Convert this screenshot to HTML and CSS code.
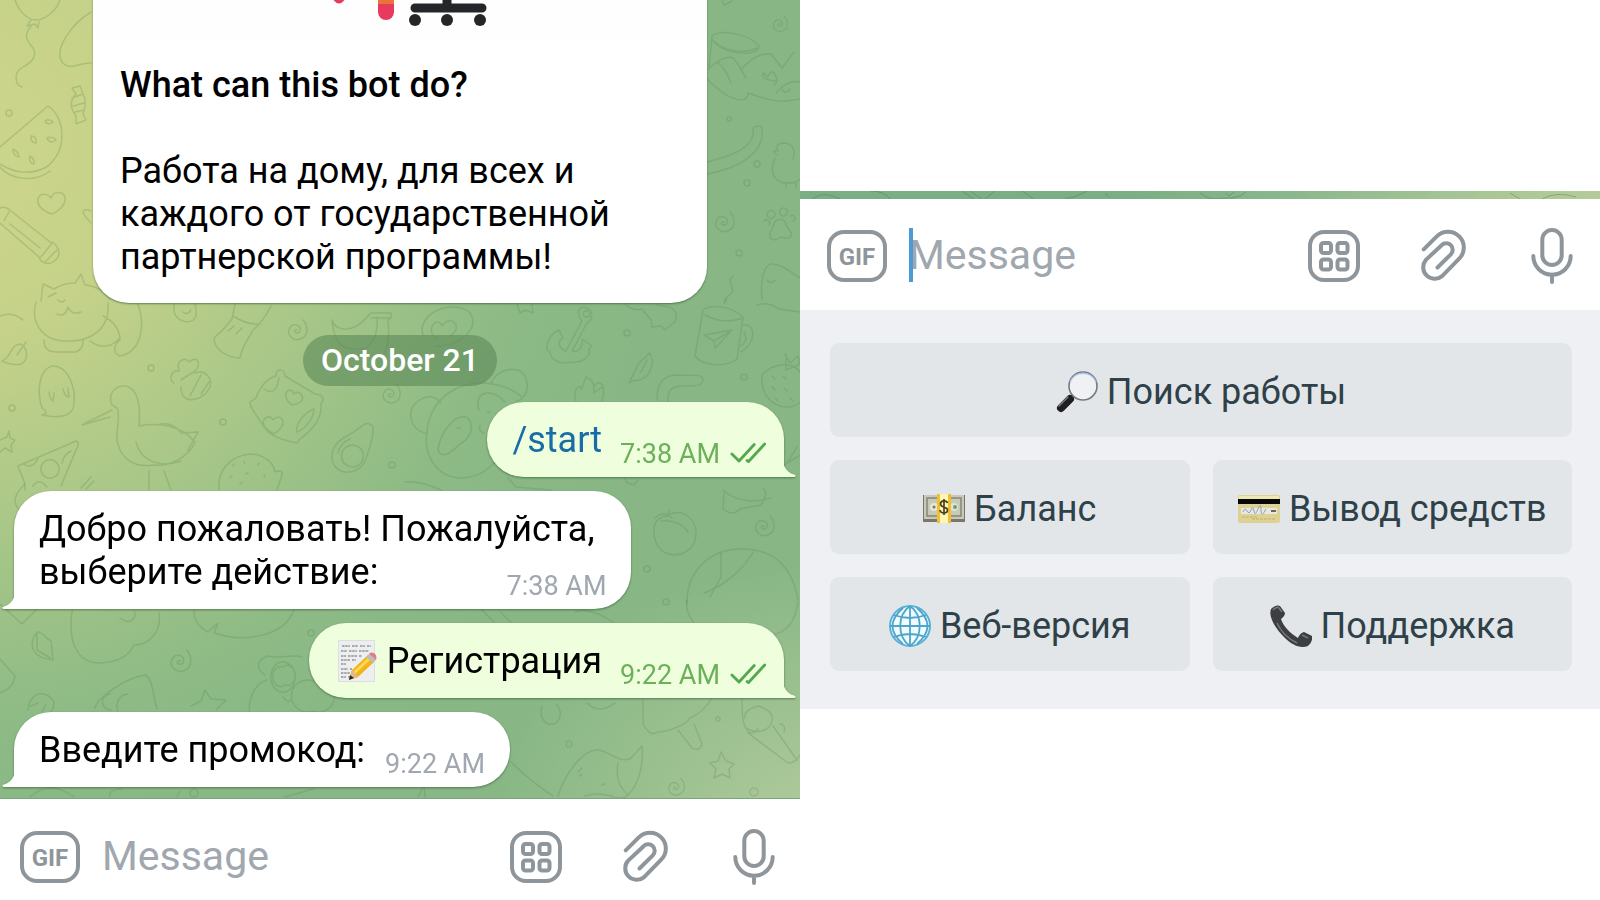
FILE: index.html
```
<!DOCTYPE html>
<html lang="ru">
  <head>
    <meta charset="UTF-8" />
    <meta name="viewport" content="width=device-width, initial-scale=1.0" />
    <title>Bot chat</title>
    <link rel="stylesheet" href="styles.css">
  </head>
  <body>
    <!-- shared icons -->
    <svg class="sprite" aria-hidden="true">
      <symbol id="i-grid" viewBox="0 0 60 60">
        <rect x="6" y="6" width="48" height="48" rx="14" />
        <rect x="17" y="17" width="10" height="10" rx="2.5" />
        <rect x="33.500" y="17" width="10" height="10" rx="2.5" />
        <rect x="17" y="33.500" width="10" height="10" rx="2.5" />
        <rect x="33.500" y="33.500" width="10" height="10" rx="2.5" />
      </symbol>
      <symbol id="i-clip" viewBox="0 0 60 60">
        <path d="M10.700 23.400L23.800 10.300A15.800 15.800 0 0 1 46.200 32.700L29.100 50.100A11.500 11.500 0 0 1 12.900 33.900L28.600 19.200A6.500 6.500 0 0 1 37.800 28.400L24.500 41.500" />
      </symbol>
      <symbol id="i-mic" viewBox="0 0 60 60">
        <rect x="20.300" y="4" width="19.400" height="35" rx="9.700" />
        <path d="M11.300 30a18.700 18.700 0 0 0 37.400 0M30 49v7" />
      </symbol>
      <symbol id="i-checks" viewBox="0 0 40 24">
        <path d="M2 13l7.500 7.500L25.500 3M18 20l1.500 1L36.500 2.500" />
      </symbol>
      <symbol id="tail" viewBox="0 0 16 28">
        <path d="M16 0C16 14 11 24 3 25.500C.5 26 1 28 4 28H16z" />
      </symbol>
      <symbol id="spiral" viewBox="0 0 26 26">
        <path d="M14 13c-2-1-4 2-1 3c5 1 6-6 1-8c-7-2-11 7-6 12c6 6 16 1 16-7c0-5-2-8-4-10" />
      </symbol>
    </svg>

    <main class="screens">
      <section class="screen">
        <div class="chat">
          <svg class="doodles" viewBox="0 0 800 800" preserveAspectRatio="xMinYMin slice" aria-hidden="true">
            <!-- balloon, candy, melon, pencil -->
            <path d="M15 0c4 12 13 20 21 20s20-8 24-20M31 20l-4 6 8-2 3 4 1-6M31 26c-14 18 10 18 2 33c-6 9-16 7-17 18c0 6 2 9 6 10" />
            <path d="M91 12C70 25 54 50 62 62c8 10 18 0 29 1" />
            <path d="M72 88l8-2 3 8c4 6 2 14 0 20l3 6-10 4 0-8c-6-8-6-16 0-22zM72 98l11-4M73 106l11-3M75 112l9-2" />
            <path d="M0 147L48 106C66 118 67 150 48 166C32 176 14 173 0 164M0 167c12 14 36 15 50 4" />
            <path d="M45 121q4-3 8 1q-5 4-8-1M31 136q6 0 5 7q-6-1-5-7M47 138q6-2 9 2q-6 5-9-2M13 149q6 3 6 8q-6-1-6-8M30 156q5 3 4 8q-6-1-4-8" />
            <path d="M52 214c-9-3-15-8-14-15c2-7 10-5 13-1c2-7 12-7 14-1c1 8-7 15-13 17z" />
            <path d="M0 208c4-2 8 0 11 3L50 242c5 0 9 6 9 11c0 6-8 12-13 10c-4 0-6-3-7-6L0 223M4 221l5-9M41 257l11-14M45 262l12-12M10 224l30 24" />
            <path d="M91 211c-7-3-10 0-6 5l6 7" />
            <!-- sleeping cat -->
            <path d="M41 301l2-17 11 5c8-5 15-6 21-6l6-9 4 11c12 1 18 6 25 14M48 297l8-4M58 300q4 4 7 0M36 302c-6 20 6 39 30 39c25 1 44-12 42-38M57 314q8 4 11-7q4 9 13 5M44 340q0 12 12 12h20q8-3 7-13M103 316q16 8 17 23M90 341q16 12 30-3M138 304c8 22 3 48-18 52c-8-3-6-12 0-16" />
            <path d="M0 316q12-5 23 4M2 361c10-4 8-16 18-17c8 3 9 16 1 20q-8 2-19-3M17 355l9-13" />
            <path d="M42 408c-5-15-4-38 10-42c16-1 24 22 22 38c-1 12-13 15-32 11c5-1 6-3 0-7M49 392q1 8 4 9l1-8M63 389q2 8 6 8l-1-9" />
            <!-- stork -->
            <path d="M112 405c-5-12 4-20 14-19c12 3 15 20 13 40c22-4 43 0 56 16c-6 15-26 25-42 23c-20 3-33-7-36-25c-1-12 4-24 0-32zM112 410l-30 15l28-8M136 442c5 20 25 26 45 19M160 424q14-2 21 9l17-1l-10 18M149 471v19M164 471l7 19" />
            <path d="M18 466l58-25c4 1 2 6 0 9L61 486M18 466c2 8 8 14 7 24M24 464q7 6 14-5M62 463q2-9 9-12M44 462a8 8 0 1 0 12 14a8 8 0 1 0-12-14M33 486q6-9 14 1M0 440l7-3 2-6 1 7 5 2-4 5 1 7-7-4-5 4" />
            <path d="M174 383c-6-4-2-14 5-12c-4-12 8-14 10-9c10-8 12 4 6 9l-14 9M181 387c0 12 8 15 18 11c10-5 15-15 9-22c-4-5-8-5-13-3M190 396l11-21M201 394l8-12" />
            <!-- brush, cookie, pillow -->
            <path d="M235 304l-3 15c-6 8-12 14-18 19c0 12 14 20 26 20c2-12 8-18 13-28q10-8 18-24M233 316q14 9 27 8M228 331l6-5M236 334l6-6M174 304q-2 15 12 18q14 0 9-18M183 312q4 4 8-2" />
            <path d="M251 407l-1-5 6-4c4-12 12-20 20-22c-1-8 9-8 9 0l30 18c8 0 10 6 6 9c2 16-10 28-21 36l-3 4c-14-3-26-6-33-16zM297 432c-2-8 8-20 17-23c0 8-8 20-17 23M264 389q12 8 15-11M292 405c-8-6-8-12-3-15c5 0 4 3 5 4c5-5 10 2 8 7q-4 3-10 4M274 434c-14-8-12-14-7-17c4-1 6 3 6 3c8-8 12 2 9 6q-2 4-8 8" />
            <path d="M219 490c-2-20 12-35 32-36c15 1 23 10 24 18q8-3 7 3l-5 15M233 466l1-2M244 462l1 2M258 465l1-2M230 478l2-2M246 474l2-1M264 477l1-2M240 484l2-2M81 488l10-11M86 489l8-8M20 510Q8 500 25 484" />
            <use href="#spiral" x="283" y="317" width="26" height="26" />
            <use href="#spiral" x="378" y="382" width="24" height="24" />
            <!-- bananas and avocado -->
            <path d="M332 320c3 12 22 14 37-5l2-2h20v5l-3 2c1 10 1 25-4 33M332 320c2 25 12 32 34 28c10-8 12-20 11-31M371 318h20" />
            <path d="M362 426c6-5 12-2 11 6c-1 12-5 19-7 27c-5 14-24 18-32 6c-6-12 1-22 11-28c8-4 12-7 17-11zM352 445a10 10 0 1 0 1 22a10 10 0 1 0-1-22M338 453q2-10 12-14" />
            <path d="M423 336c-5-16 12-30 32-29c18 1 22 14 14 25c-9 10-22 14-33 14M437 339c-8-5-7-15 0-17q4 0 5 4q8-10 14-1q2 6-6 11" />
            <path d="M517 304l3 9 5-3 8 3-1-9" />
            <!-- panda -->
            <path d="M425 433c-14-3-20-22-7-32c9-6 17-6 23 2M491 384c4-14 28-22 35-6q5 18-10 24M427 432c-4 24 10 45 34 46c20 0 39-14 45-38M438 450c2-18 18-38 30-32c8 10 0 22-8 26c-8 8-18 16-22 6M479 410c-6-20 14-22 26-8M427 435c0-38 38-62 77-48q10 3 18 10M457 428h3M487 412h3M480 425q-2 6 4 8" />
            <!-- anchor and mug -->
            <path d="M580 308a7 7 0 1 1 7 15l-15 28c7 2 11-4 10-12l10 7-3 3c2 10-9 14-18 13c-9 3-20-1-21-10l-3-2q-1-14 12-20l4 8c-6 3-5 10 3 13l16-30q-6-7-2-13M584 312a3 3 0 1 0 5 4a3 3 0 1 0-5-4" />
            <path d="M625 304c4 4 9 7 17 5l9 11 1 7 9-1 4 4 10-8c3-6 1-13-6-15l-13-2M703 310l-8 46c8 10 30 12 42 3l6-42c-10-10-32-14-40-7zM705 315q18 10 38 3M742 325c14-3 15 18-1 27M744 332q5 8-3 14M704 335l28-5-13 14-4 4-1-7zM714 341l15-9M724 304q0-4 2-6" />
            <path d="M629 383l10-20c4-5 8-5 10-10c7 6 2 25-10 27q-6 0-10 3M641 372l6-12M657 400c0-20 8-25 22-25c12 1 24-2 24 5c-1 8-12 5-22 6c-12 1-13 6-13 16M576 401c-4-10 4-20 5-11l5-13c8 4 8 8 8 16l8-6c4 6 0 10 0 14M594 387q5-9 10 1M757 305q10-4 22 4l21 3" />
            <path d="M763 374c12-12 30-12 37-2M762 374c-2 20 10 33 25 33q8 0 13-5M785 354l5 9 8-7 2 8M786 354v16l14-6M772 376l3 3M783 376l3 3M772 387l3 3M784 388l3 3M775 398l3 3M790 398l3 3" />
            <path d="M723 490c10 10 30 14 48 8M724 493l-1 16q10 8 17 0l21-4q8-12 2-17M787 463l10-16M784 465l16-10M763 444v18M405 482q14-2 36 8M508 478l8 9 35 3M625 478l1 4 8 3 4-5" />
            <!-- tangerine and ball -->
            <path d="M667 516c-18 2-15 24-6 34c12 10 34 4 35-16c1-14-14-28-29-18M655 518q8-8 17 0M661 521q18-2 27 11M668 516l1-6" />
            <path d="M687 604c-1-30 20-55 55-55c30 0 50 15 56 51M721 552v25l-11 20M754 551c-10 18-30 35-50 42" />
            <use href="#spiral" x="750" y="513" width="26" height="26" />
            <!-- top right corner -->
            <path d="M712 36c10-8 38-1 47 10c0 8-15 9-29 5c-10-3-19-9-18-15zM714 41c10 12 35 12 43 7M712 38l-3 30M706 71c8-8 20-16 27-13c6 6 8 12 13 20M718 63q8 6 13 20M741 70c8-10 20-18 30-16l11 14 12-16M706 78c12 12 22 20 34 22q8 0 8-7c14 4 26 12 52 6M776 81c-10 0-16-6-12-8l4 4q4-10 8 0q2 6-2 8M776 93q12-14 24-11M782 90q4 5 8-1" />
            <path d="M707 162c16-4 50-12 46-34q6-4 9 0c3 25-22 40-55 46M778 151q-4-8 7-8q12 2 8 16M778 150l-5 2 4 3M775 158c-8 20 4 26 15 25q6 0 10-4M786 182v6M796 182v6" />
            <path d="M770 236c-2-5 4-7 4-12c2-6 10-6 12 0c0 5 7 6 5 12q-2 4-10 1q-9 6-11-1M768 212a3 3 0 1 1 6 5a3 3 0 1 1-6-5M781 209a3 3 0 1 1 5 6a3 3 0 1 1-5-6M790 216a3 3 0 1 1 3 5M764 221a3 3 0 1 1 5 4" />
            <path d="M762 300c-2-20 2-36 10-36c10 0 18 8 28 14M767 280q4 5 8 0M722 0l2 5 8-4M733 276c-8 6 4 12-2 18q-6 4-5 8" />
            <use href="#spiral" x="769" y="14" width="20" height="20" />
            <use href="#spiral" x="710" y="209" width="26" height="26" />
            <!-- bottom row -->
            <path d="M0 604l22 20 16-16M72 611c-4 30 4 52 28 52c18-1 28-6 34-18c14 0 28-12 25-32M120 618c10 8 18 0 14-7M194 610c0 12 6 18 14 22l10-9-4 10c30 10 70 4 80-23" />
            <path d="M37 632c6 0 8 6 14 9l2 19c-20-2-26-14-16-28M37 632v18l13 8M0 659l15 17c-1 8-6 14-15 17M28 710c2-20 20-20 26-8q0 8-4 10M31 706l7-3M42 712l4-8" />
            <path d="M95 708c2-10 30-30 50-33c8 3 8 22 12 34M110 694a8 8 0 1 0 1 16M128 694a12 12 0 0 0-10 17M191 706l10-5 4-11 6 9 15 1-10 10" />
            <path d="M265 675c-8-5-10-15 3-19c14 3 24-2 34 1M249 712c0-20 10-30 18-32M281 662a12 15 0 1 0 4 30a12 15 0 1 0-4-30M283 667a8 10 0 1 0 2 18a8 10 0 1 0-2-18M313 681a16 16 0 1 0 0 30a16 16 0 1 0 0-30M283 697q5 7 9 2" />
            <path d="M482 610l12 12M500 612l12 11M575 612q16-5 38 10M742 698c0 15 0 30 8 35q6 0 8-5M643 700v24c4 8 10 12 14 8c12 0 30-8 33-14q14-6 22-20M678 730l14 18q8 4 10-4l-8-20M745 718q-2-8 13-12q20 6 12 20q-10 10-24 2M748 733l40 30q8 0 12-8M773 726l24 34M780 724q6 0 4 8M542 706c-4 12 4 20 12 18c8-4 8-14 2-20M587 703q12 12 28 0" />
            <path d="M558 796c8-25 25-45 38-46c14 0 20 13 34 9l12-13c2 20-4 40-15 50q-8 4-16 0q-14-4-26 0M618 763q-4 20 10 32M578 772l4-4M580 776l2-2M602 785l3-1M511 762q20 20 42 34" />
            <path d="M721 752l-3 9 -8 2 6 6 -2 9 8-4 8 4-1-9 5-5-8-3z" />
            <path d="M30 797q20-18 44 0M110 797q-2-8 12-8M177 797l3-6M418 797l6-12 1 12M285 797l28-8M687 600q-3 16 14 30M798 602q-4 30-27 33" />
            <use href="#spiral" x="165" y="647" width="28" height="28" />
            <use href="#spiral" x="664" y="776" width="22" height="22" />
            <g>
              <circle cx="9" cy="113" r="3" /><circle cx="12" cy="408" r="3" /><circle cx="151" cy="368" r="3" />
              <circle cx="223" cy="422" r="3" /><circle cx="392" cy="465" r="3" /><circle cx="627" cy="333" r="3" />
              <circle cx="744" cy="377" r="3" /><circle cx="757" cy="164" r="3" /><circle cx="747" cy="183" r="3" />
              <circle cx="729" cy="119" r="2" /><circle cx="739" cy="253" r="3" /><circle cx="647" cy="569" r="3" />
              <circle cx="311" cy="633" r="3" /><circle cx="569" cy="744" r="3" /><circle cx="718" cy="719" r="2" />
              <circle cx="754" cy="792" r="4" /><circle cx="194" cy="793" r="4" /><circle cx="666" cy="602" r="3" />
            </g>
          </svg>

          <article class="intro">
            <svg class="intro-picture" viewBox="0 -4 614 40" preserveAspectRatio="xMidYMin meet" role="img" aria-label="Office chair">
              <path d="M293 -4v14" stroke="#e83a5e" stroke-width="16" stroke-linecap="round" />
              <path d="M285 -4h16v6h-16z" fill="#e8743c" />
              <path d="M239 -4q7 11 14 0z" fill="#e83a5e" />
              <path d="M322 6h67M354 -4v9" stroke="#25262a" stroke-width="9" stroke-linecap="round" />
              <circle cx="322" cy="18" r="6" fill="#25262a" />
              <circle cx="354" cy="18" r="6" fill="#25262a" />
              <circle cx="387" cy="18" r="6" fill="#25262a" />
            </svg>
            <h1>What can this bot do?</h1>
            <p>Работа на дому, для всех и каждого от государственной партнерской программы!</p>
          </article>

          <time class="date">October 21</time>

          <div class="messages">
            <div class="bubble out">
              <a class="command" href="#start">/start</a>
              <time class="time">7:38 AM</time>
              <svg class="checks"><use href="#i-checks" /></svg>
              <svg class="tail"><use href="#tail" /></svg>
            </div>

            <div class="bubble in long">
              <span class="line">Добро пожаловать! Пожалуйста,</span>
              <div class="last-line">
                <span>выберите действие:</span>
                <time class="time">7:38 AM</time>
              </div>
              <svg class="tail"><use href="#tail" /></svg>
            </div>

            <div class="bubble out">
              <span class="with-emoji">
                <svg class="emoji" viewBox="0 0 42 42">
                  <path d="M1 0h37v42H1z" fill="#dcdee1" />
                  <path d="M2 1h35v40H2z" fill="#eceef0" />
                  <path d="M5 6h8m2 0h6m2 0h5m2 0h4M4 11h6m2 0h8m2 0h10M4 16h5m2 0h9m2 0h3M4 20h9m2 0h4M4 24h5M4 29h7m2 0h2M4 33h9M4 37h5m2 0h2" stroke="#64666c" stroke-width="1.200" stroke-dasharray="2.500 .7" />
                  <path d="M12 40l3-10L31 15l6 7L21 37z" fill="#f0b41f" />
                  <path d="M17 33L33 18" stroke="#ffd84d" stroke-width="3" />
                  <path d="M12 40l3-10 6 7z" fill="#e2b98c" />
                  <path d="M12 40l1-5 4 3z" fill="#29292b" />
                  <path d="M29 17l3-3 7 6-3 3z" fill="#b9bcc2" />
                  <path d="M32 14c4-4 9 1 7 6z" fill="#e77b84" />
                </svg>
                Регистрация
              </span>
              <time class="time">9:22 AM</time>
              <svg class="checks"><use href="#i-checks" /></svg>
              <svg class="tail"><use href="#tail" /></svg>
            </div>

            <div class="bubble in">
              <span>Введите промокод:</span>
              <time class="time">9:22 AM</time>
              <svg class="tail"><use href="#tail" /></svg>
            </div>
          </div>
        </div>

        <form class="composer">
          <button type="button" class="gif">GIF</button>
          <div class="field">
            <input type="text" placeholder="Message" aria-label="Message" />
          </div>
          <button type="button" class="tool" aria-label="Bot keyboard"><svg><use href="#i-grid" /></svg></button>
          <button type="button" class="tool" aria-label="Attach"><svg><use href="#i-clip" /></svg></button>
          <button type="button" class="tool" aria-label="Voice message"><svg><use href="#i-mic" /></svg></button>
        </form>
      </section>

      <section class="screen menu-screen">
        <svg class="chat-edge" viewBox="0 0 800 8" preserveAspectRatio="none" aria-hidden="true">
          <path d="M12 8q12-9 28 0M70 0q15 0 20 8M162 0l12 8M170 0l12 8M185 8l10-8M222 0l12 8M265 8q12-2 22-8M305 2l4 4M400 2q8 8 24 5q14 1 22-6M425 2l4 3 5-4M710 2l10 6M742 8q14-8 34-2" />
        </svg>

        <form class="composer roomy">
          <button type="button" class="gif">GIF</button>
          <div class="field">
            <input type="text" placeholder="Message" aria-label="Message" />
            <span class="caret"></span>
          </div>
          <button type="button" class="tool" aria-label="Bot keyboard"><svg><use href="#i-grid" /></svg></button>
          <button type="button" class="tool" aria-label="Attach"><svg><use href="#i-clip" /></svg></button>
          <button type="button" class="tool" aria-label="Voice message"><svg><use href="#i-mic" /></svg></button>
        </form>

        <div class="keyboard">
          <button type="button" class="key full">
            <svg class="emoji" viewBox="0 0 42 42">
              <path d="M17 25l-4 4" stroke="#8b8d92" stroke-width="4" />
              <path d="M14 28l-9 9" stroke="#1e1e20" stroke-width="8" stroke-linecap="round" />
              <path d="M12 26l-9 9" stroke="#77797d" stroke-width="1.500" stroke-linecap="round" />
              <circle cx="27" cy="15" r="14" fill="#eff1f5" stroke="#77797f" stroke-width="1.600" />
              <path d="M14 11a14 14 0 0 1 26 0" fill="none" stroke="#a9c4ea" stroke-width="1.500" />
            </svg>
            Поиск работы
          </button>
          <button type="button" class="key">
            <svg class="emoji" viewBox="0 0 42 42">
              <path d="M0 7h42v27H0z" fill="#77776b" />
              <path d="M1 7h40v24H1z" fill="#c9c9b8" />
              <path d="M4 10h34v18H4z" fill="none" stroke="#86867a" stroke-width="1.500" />
              <circle cx="11" cy="19" r="4" fill="#e6e6da" />
              <circle cx="31" cy="19" r="4" fill="#dce5d5" />
              <circle cx="11" cy="19" r="1.500" fill="#77776b" />
              <circle cx="32" cy="19" r="2" fill="#6ba274" />
              <path d="M14 6h14v29H14z" fill="#f0c02e" />
              <path d="M17 6h8v29h-8z" fill="#fff5b5" />
              <path d="M24.500 15c-1-3-7-3-7 1s7 2 7 6-7 4-7.500 0M21 11v16" fill="none" stroke="#4b401e" stroke-width="1.700" />
            </svg>
            Баланс
          </button>
          <button type="button" class="key">
            <svg class="emoji" viewBox="0 0 42 42">
              <rect x="0" y="7" width="42" height="28" rx="2" fill="#ddd193" />
              <path d="M1 8h40v4H1z" fill="#eee9b4" />
              <path d="M0 11h42v5H0z" fill="#080808" />
              <path d="M3 20h36v6H3z" fill="#e9e8e0" />
              <path d="M5 24q2-5 4-1t4-1 3 1 4-2 3 1 5-1" fill="none" stroke="#8fa3bd" stroke-width="1" />
              <path d="M33 23h5" stroke="#66675f" stroke-width="2" />
              <path d="M4 29h16M14 31h24" stroke="#cabd7c" stroke-width="1.500" stroke-dasharray="3 1" />
            </svg>
            Вывод средств
          </button>
          <button type="button" class="key">
            <svg class="emoji" viewBox="0 0 42 42">
              <circle cx="21" cy="21" r="20" fill="#f1fbff" stroke="#57b2d6" stroke-width="2" />
              <path d="M21 1v40M1 21h40M5 10q16 6 32 0M5 32q16-6 32 0M21 1C8 10 8 32 21 41C34 32 34 10 21 1M14 3C0 15 0 27 14 39M28 3c14 12 14 24 0 36" fill="none" stroke="#4da5cb" stroke-width="1.800" />
            </svg>
            Веб-версия
          </button>
          <button type="button" class="key">
            <svg class="emoji" viewBox="0 0 42 42">
              <path d="M1 4q5-5 9-3l5 7q0 3-4 6c2 7 9 14 17 19q2-5 6-6l8 4q1 6-4 10c-8 3-16-1-24-9C6 24-2 12 1 4z" fill="#3d3e41" />
              <path d="M3 5q4-4 6-2l3 4M7 18c4 9 12 16 20 20M32 30l6 3" fill="none" stroke="#77787b" stroke-width="1.500" />
            </svg>
            Поддержка
          </button>
        </div>
      </section>
    </main>
  </body>
</html>
```
FILE: styles.css
```
* {
  box-sizing: border-box;
  margin: 0;
  padding: 0;
}

body {
  font-family: Roboto, "Liberation Sans", sans-serif;
  font-size: 36px;
  line-height: 43px;
  color: #000;
  background: #fff;
}

button,
input {
  font: inherit;
  border: none;
  background: none;
}

.sprite {
  position: absolute;
  width: 0;
  height: 0;
}

.screens {
  display: grid;
  grid-template-columns: 1fr 1fr;
  height: 100vh;
}

.screen {
  display: flex;
  flex-direction: column;
  min-width: 0;
  min-height: 0;
}

.menu-screen {
  justify-content: center;
}

/* chat */
.chat {
  position: relative;
  flex: 1;
  min-height: 0;
  display: flex;
  flex-direction: column;
  justify-content: flex-end;
  padding-bottom: 11px;
  overflow: hidden;
  border-bottom: 1px solid #7ba57e;
  background:
    radial-gradient(ellipse 40% 32% at 102% 103%, #b0ca9c 0%, rgba(176, 202, 156, 0) 100%),
    radial-gradient(ellipse 90% 92% at -6% 18%, #cdd68b 0%, #c6d289 26%, rgba(174, 202, 137, 0.8) 55%, rgba(150, 192, 134, 0.35) 80%, rgba(136, 184, 132, 0) 100%),
    #88b785;
}

.doodles {
  position: absolute;
  inset: 0;
  width: 100%;
  height: 100%;
  fill: none;
  stroke: rgba(84, 134, 76, 0.26);
  stroke-width: 1.5;
  stroke-linecap: round;
  stroke-linejoin: round;
}

.intro {
  position: relative;
  align-self: center;
  flex-shrink: 0;
  width: 614px;
  max-width: 90%;
  margin-bottom: 32px;
  padding: 0 28px 24px 27px;
  border-radius: 0 0 36px 36px;
  background: #fff;
  box-shadow: 0 1px 2px rgba(40, 80, 40, 0.6);
}

.intro-picture {
  display: block;
  width: calc(100% + 55px);
  height: 40px;
  margin: 0 -28px 26px -27px;
  background: #fefefe;
}

.intro h1 {
  margin-bottom: 43px;
  font-size: 36px;
  font-weight: 500;
}

.date {
  position: relative;
  align-self: center;
  flex-shrink: 0;
  margin-bottom: 16px;
  padding: 4px 18px;
  border-radius: 26px;
  background: rgba(92, 136, 88, 0.6);
  color: #fff;
  font-size: 32px;
  font-weight: 500;
}

.messages {
  position: relative;
  flex-shrink: 0;
  display: flex;
  flex-direction: column;
  gap: 14px;
  padding: 0 16px 0 14px;
}

.bubble {
  position: relative;
  display: flex;
  align-items: flex-end;
  gap: 20px;
  padding: 17px 25px 15px;
  border-radius: 37px;
  filter: drop-shadow(0 1px 1px rgba(40, 80, 40, 0.6));
}

.in {
  align-self: flex-start;
  border-bottom-left-radius: 0;
  background: #fff;
  fill: #fff;
}

.out {
  align-self: flex-end;
  gap: 18px;
  border-bottom-right-radius: 0;
  padding-right: 16px;
  background: #efffde;
  fill: #efffde;
}

.long {
  flex-direction: column;
  align-items: stretch;
  gap: 0;
}

.line {
  padding-right: 12px;
}

.last-line {
  display: flex;
  align-items: flex-end;
  justify-content: space-between;
}

.tail {
  position: absolute;
  bottom: 0;
  left: -13px;
  width: 16px;
  height: 28px;
}

.out .tail {
  left: auto;
  right: -13px;
  transform: scaleX(-1);
}

.command {
  color: #1a6ca8;
  text-decoration: none;
}

.time {
  margin-bottom: -8px;
  color: #a0a7b0;
  font-size: 27px;
  line-height: 32px;
}

.out .time {
  color: #6cb05a;
}

.checks {
  width: 38px;
  height: 24px;
  margin: 0 0 -3px -8px;
  fill: none;
  stroke: #55a84e;
  stroke-width: 3;
  stroke-linecap: round;
  stroke-linejoin: round;
}

.emoji {
  flex-shrink: 0;
  width: 42px;
  height: 42px;
}

.with-emoji {
  display: flex;
  gap: 8px;
  padding-left: 3px;
}

/* message field */
.composer {
  display: flex;
  align-items: center;
  gap: 49px;
  padding: 28px 16px 13px 20px;
  background: #fff;
}

.roomy {
  padding: 27px 18px 24px 27px;
}

.gif {
  width: 60px;
  height: 52px;
  padding-top: 2px;
  border: 4px solid #8e959b;
  border-radius: 17px;
  color: #8e959b;
  font-size: 24px;
  font-weight: 700;
  text-align: center;
}

.field {
  position: relative;
  flex: 1;
  min-width: 0;
  margin-left: -27px;
}

.field input {
  display: block;
  width: 100%;
  height: 60px;
  padding-bottom: 2px;
  font-size: 41px;
  outline: none;
}

.field input::placeholder {
  color: #a0a7ae;
  opacity: 1;
}

.caret {
  position: absolute;
  top: 2px;
  left: 0;
  width: 4px;
  height: 54px;
  background: #4c9bd4;
}

.tool {
  width: 60px;
  height: 60px;
  cursor: pointer;
}

.tool svg {
  display: block;
  width: 60px;
  height: 60px;
  fill: none;
  stroke: #8e959b;
  stroke-width: 4;
  stroke-linecap: round;
  stroke-linejoin: round;
}

/* bot keyboard */
.chat-edge {
  width: 100%;
  height: 8px;
  background: linear-gradient(90deg, #7bae85 0%, #7bae85 40%, #88b78b 60%, #a9c695 85%, #b4cb98 100%);
  fill: none;
  stroke: rgba(70, 120, 76, 0.4);
}

.keyboard {
  display: grid;
  grid-template-columns: 1fr 1fr;
  gap: 23px;
  padding: 33px 28px 38px 30px;
  background: #eff0f4;
}

.key {
  display: flex;
  align-items: center;
  justify-content: center;
  gap: 9px;
  min-height: 94px;
  padding-top: 4px;
  border-radius: 9px;
  background: #e2e6e9;
  color: #2f4148;
  cursor: pointer;
}

.full {
  grid-column: 1 / -1;
}
```
